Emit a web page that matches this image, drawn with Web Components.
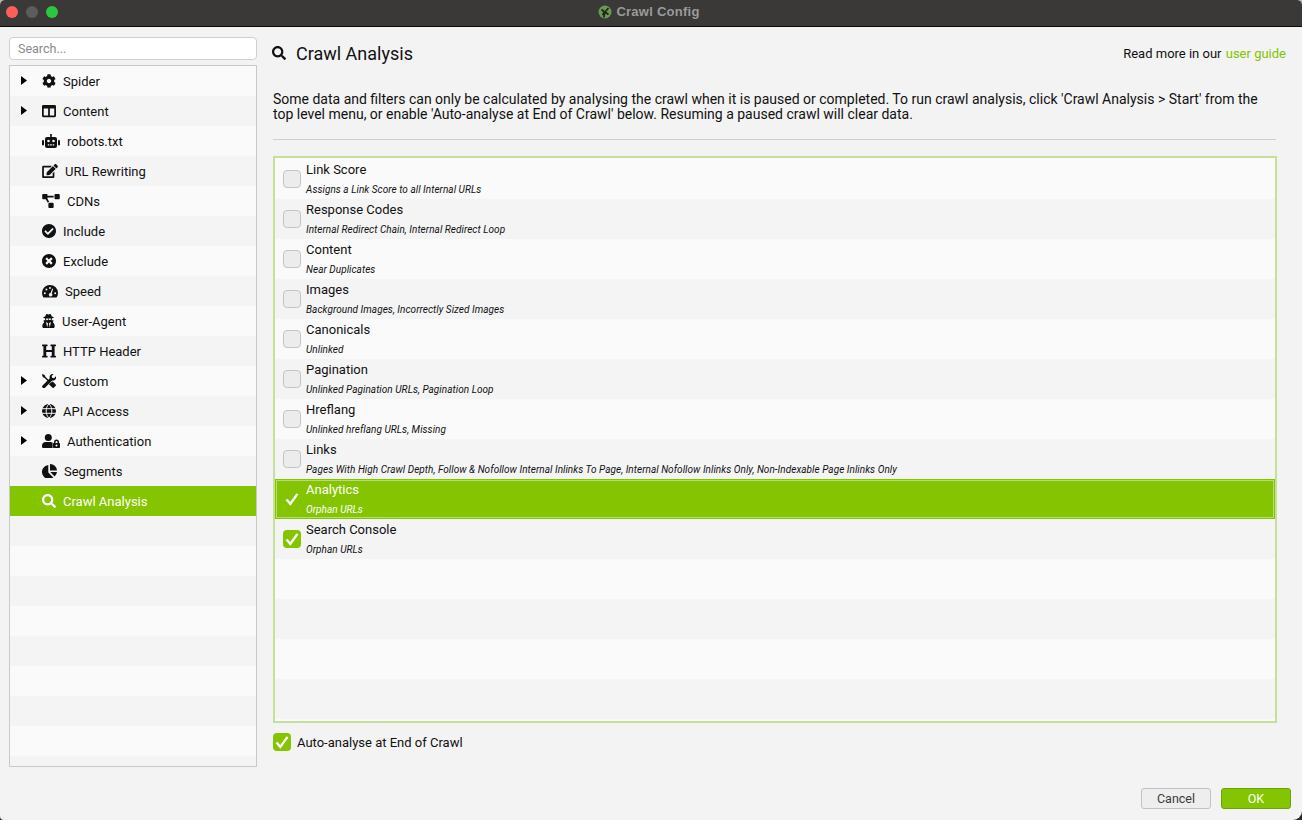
<!DOCTYPE html>
<html>
<head>
<meta charset="utf-8">
<title>Crawl Config</title>
<style>
  html, body { margin: 0; padding: 0; background: linear-gradient(#b5b5b5 50%, #2b2b2b 50%); }
  body { width: 1302px; height: 820px; overflow: hidden; font-family: Roboto, "Liberation Sans", sans-serif; }
</style>
</head>
<body>
<crawl-config></crawl-config>

<script>
const GREEN = '#84c400';

// Iconos
const ICONS = {
  cog: { w: 14, vb: '0 0 512 512', svg: '<path d="M487.4 315.7l-42.6-24.6c4.3-23.2 4.3-47 0-70.2l42.6-24.6c4.9-2.8 7.1-8.6 5.5-14-11.1-35.6-30-67.8-54.7-94.6-3.8-4.1-10-5.1-14.8-2.3L380.8 110c-17.9-15.4-38.5-27.3-60.8-35.1V25.8c0-5.6-3.9-10.5-9.4-11.7-36.7-8.2-74.3-7.8-109.2 0-5.5 1.2-9.4 6.1-9.4 11.7V75c-22.2 7.9-42.8 19.8-60.8 35.1L88.7 85.5c-4.9-2.8-11-1.9-14.8 2.3-24.7 26.7-43.6 58.9-54.7 94.6-1.7 5.4.6 11.2 5.5 14L67.3 221c-4.3 23.2-4.3 47 0 70.2l-42.6 24.6c-4.9 2.8-7.1 8.6-5.5 14 11.1 35.6 30 67.8 54.7 94.6 3.8 4.1 10 5.1 14.8 2.3l42.6-24.6c17.9 15.4 38.5 27.3 60.8 35.1v49.2c0 5.6 3.9 10.5 9.4 11.7 36.7 8.2 74.3 7.8 109.2 0 5.5-1.2 9.4-6.1 9.4-11.7v-49.2c22.2-7.9 42.8-19.8 60.8-35.1l42.6 24.6c4.9 2.8 11 1.9 14.8-2.3 24.7-26.7 43.6-58.9 54.7-94.6 1.5-5.5-.7-11.3-5.6-14.1zM256 336c-44.1 0-80-35.9-80-80s35.9-80 80-80 80 35.9 80 80-35.9 80-80 80z"/>' },
  columns: { w: 14, vb: '0 0 512 512', svg: '<path d="M464 32H48C21.490 32 0 53.490 0 80v352c0 26.510 21.490 48 48 48h416c26.510 0 48-21.490 48-48V80c0-26.510-21.490-48-48-48zM224 416H64V160h160v256zm224 0H288V160h160v256z"/>' },
  robot: { w: 18, vb: '0 0 18 14', svg: '<path fill-rule="evenodd" d="M8.200 1.500a1 1 0 1 1 1.600 0V3H13a2 2 0 0 1 2 2v7a2 2 0 0 1-2 2H5a2 2 0 0 1-2-2V5a2 2 0 0 1 2-2h3.200zM6.500 5.700a1.300 1.300 0 1 0 0 2.600 1.300 1.300 0 0 0 0-2.600zm5 0a1.300 1.300 0 1 0 0 2.600 1.300 1.300 0 0 0 0-2.600zM5.800 10.300v1.300h1.500v-1.300zm2.400 0v1.300h1.600v-1.300zm2.500 0v1.300h1.500v-1.300z"/><rect x="0" y="6" width="2" height="5.500" rx="1"/><rect x="16" y="6" width="2" height="5.500" rx="1"/>' },
  edit: { w: 16, vb: '0 0 576 512', svg: '<path d="M402.600 83.200l90.200 90.200c3.800 3.800 3.800 10 0 13.800L274.400 405.600l-92.800 10.300c-12.400 1.400-22.900-9.100-21.500-21.500l10.300-92.800L388.800 83.200c3.800-3.800 10-3.800 13.800 0zm162-22.900l-48.800-48.800c-15.200-15.200-39.900-15.200-55.200 0l-35.400 35.400c-3.800 3.800-3.800 10 0 13.800l90.200 90.200c3.800 3.800 10 3.800 13.800 0l35.400-35.400c15.200-15.300 15.200-40 0-55.200zM384 346.200V448H64V128h229.800c3.200 0 6.200-1.300 8.500-3.500l40-40c7.600-7.600 2.200-20.500-8.500-20.500H48C21.500 64 0 85.500 0 112v352c0 26.500 21.500 48 48 48h352c26.500 0 48-21.500 48-48V306.200c0-10.700-12.900-16-20.500-8.500l-40 40c-2.200 2.300-3.500 5.300-3.500 8.500z"/>' },
  cdn: { w: 18, vb: '0 0 640 512', svg: '<path d="M384 320H256c-17.670 0-32 14.330-32 32v128c0 17.670 14.330 32 32 32h128c17.670 0 32-14.330 32-32V352c0-17.670-14.330-32-32-32zM192 32c0-17.670-14.330-32-32-32H32C14.330 0 0 14.330 0 32v128c0 17.670 14.330 32 32 32h95.720l73.160 128.040C211.980 300.980 232.400 288 256 288h.280L192 175.510V128h224V64H192V32zM608 0H480c-17.670 0-32 14.330-32 32v128c0 17.670 14.330 32 32 32h128c17.670 0 32-14.330 32-32V32c0-17.670-14.330-32-32-32z"/>' },
  check: { w: 14, vb: '8 8 496 496', svg: '<path d="M504 256c0 136.967-111.033 248-248 248S8 392.967 8 256 119.033 8 256 8s248 111.033 248 248zM227.314 387.314l184-184c6.248-6.248 6.248-16.379 0-22.627l-22.627-22.627c-6.248-6.249-16.379-6.249-22.628 0L216 308.118l-70.059-70.059c-6.248-6.248-16.379-6.248-22.628 0l-22.627 22.627c-6.248 6.248-6.248 16.379 0 22.627l104 104c6.249 6.249 16.379 6.249 22.628.001z"/>' },
  times: { w: 14, vb: '8 8 496 496', svg: '<path d="M256 8C119 8 8 119 8 256s111 248 248 248 248-111 248-248S393 8 256 8zm121.600 313.100c4.700 4.700 4.700 12.300 0 17L338 377.600c-4.700 4.700-12.300 4.700-17 0L256 312l-65.100 65.600c-4.700 4.700-12.300 4.700-17 0L134.400 338c-4.700-4.700-4.700-12.300 0-17l65.600-65-65.600-65.100c-4.700-4.700-4.700-12.300 0-17l39.600-39.600c4.700-4.700 12.300-4.700 17 0l65 65.700 65.100-65.600c4.700-4.700 12.300-4.700 17 0l39.600 39.600c4.700 4.700 4.700 12.300 0 17L312 256l65.600 65.100z"/>' },
  gauge: { w: 16, vb: '0 0 16 14', svg: '<path fill-rule="evenodd" d="M8 1a8 8 0 0 1 8 8c0 1.500-.4 2.900-1.100 4a1.200 1.200 0 0 1-1 .5H2.100a1.200 1.200 0 0 1-1-.5A8 8 0 0 1 8 1zM8 3a1 1 0 1 0 0 2 1 1 0 0 0 0-2zM4.400 4.500a1 1 0 1 0 0 2 1 1 0 0 0 0-2zM2.800 8.200a1 1 0 1 0 0 2 1 1 0 0 0 0-2zm10.400 0a1 1 0 1 0 0 2 1 1 0 0 0 0-2zM11.200 4.700l-1 .1L8.500 9a1.700 1.700 0 1 0 1.300.5z"/>' },
  agent: { w: 13, vb: '0 0 448 512', svg: '<path d="M383.900 308.300l23.900-62.600c4-10.500-3.700-21.700-15-21.700h-58.500c11-18.900 17.800-40.600 17.800-64v-.3c39.200-7.800 64-19.100 64-31.700 0-13.300-27.300-25.100-70.100-33-9.200-32.800-27-65.800-40.600-82.800-9.500-11.900-25.900-15.600-39.500-8.800l-27.600 13.800c-9 4.500-19.600 4.500-28.600 0L182.100 3.400c-13.600-6.800-30-3.100-39.500 8.800-13.500 17-31.400 50-40.600 82.800-42.700 7.900-70 19.700-70 33 0 12.600 24.800 23.900 64 31.700v.3c0 23.400 6.800 45.100 17.800 64H56.300c-11.500 0-19.200 11.700-14.700 22.300l25.800 60.200C27.300 329.800 0 372.700 0 422.400v44.800C0 491.900 20.100 512 44.800 512h358.400c24.700 0 44.800-20.100 44.800-44.800v-44.800c0-48.400-25.800-90.400-64.100-114.100zM176 480l-41.600-192 49.600 32 24 40-32 120zm96 0l-32-120 24-40 49.600-32L272 480zm41.700-298.500c-3.900 11.900-7 24.600-16.500 33.400-10.100 9.300-48 22.400-64-25-2.800-8.400-15.400-8.400-18.300 0-17 50.200-56 32.400-64 25-9.500-8.800-12.700-21.500-16.500-33.400-.8-2.500-6.300-5.700-6.300-5.800v-10.800c28.300 3.600 61 5.800 96 5.800s67.700-2.200 96-5.800v10.800c-.1.100-5.600 3.200-6.400 5.800z"/>' },
  heading: { w: 14, vb: '16 32 480 448', svg: '<path d="M448 96v320h32a16 16 0 0 1 16 16v32a16 16 0 0 1-16 16H320a16 16 0 0 1-16-16v-32a16 16 0 0 1 16-16h32V288H160v128h32a16 16 0 0 1 16 16v32a16 16 0 0 1-16 16H32a16 16 0 0 1-16-16v-32a16 16 0 0 1 16-16h32V96H32a16 16 0 0 1-16-16V48a16 16 0 0 1 16-16h160a16 16 0 0 1 16 16v32a16 16 0 0 1-16 16h-32v128h192V96h-32a16 16 0 0 1-16-16V48a16 16 0 0 1 16-16h160a16 16 0 0 1 16 16v32a16 16 0 0 1-16 16z"/>' },
  tools: { w: 14, vb: '0 0 14 14', svg: '<path d="M.7 0L0 .7l.9 2.500 1.500.6 3 3 1-1-3-3-.6-1.500zM10.800 0a3.200 3.200 0 0 0-3 4.300L.6 11.500a1.600 1.600 0 0 0 0 2.200l.2.100a1.600 1.600 0 0 0 2.200 0l7.200-7.200a3.200 3.200 0 0 0 3.700-4.300L12 4.200l-1.900-.4-.4-1.900L11.600.1a3.200 3.200 0 0 0-.8-.1zM8.500 8.700l-1.600 1.600 3.300 3.300a1.300 1.300 0 0 0 1.800 0l1.500-1.500a1.300 1.300 0 0 0 0-1.800l-2.800-2.800z"/>' },
  globe: { w: 14, vb: '0 0 14 14', svg: '<circle cx="7" cy="7" r="7"/><path d="M0 4.700h14M0 9.300h14M7 0c-2.200 2-2.800 4.500-2.800 7s.6 5 2.800 7M7 0c2.200 2 2.800 4.500 2.800 7s-.6 5-2.800 7" fill="none" stroke="var(--bg,#fff)" stroke-width="1"/>' },
  userlock: { w: 18, vb: '0 0 18 14', svg: '<circle cx="6.300" cy="3.500" r="3.500"/><path d="M4 8h4.600c.7 0 1.400.2 2 .5v5.500H1.300A1.300 1.300 0 0 1 0 12.700v-.7A4 4 0 0 1 4 8z"/><path fill-rule="evenodd" d="M14.500 5.500a2.500 2.500 0 0 1 2.500 2.500v1h.2c.4 0 .8.400.8.800v3.400c0 .4-.4.800-.8.800h-5.400a.8.800 0 0 1-.8-.8V9.800c0-.4.400-.8.800-.8h.2V8a2.500 2.500 0 0 1 2.500-2.500zm0 1.500a1 1 0 0 0-1 1v1h2V8a1 1 0 0 0-1-1zm0 3.500a1 1 0 1 0 0 2 1 1 0 0 0 0-2z"/>' },
  pie: { w: 15, vb: '0 0 15 14', svg: '<path d="M6.300 1v7.500l5 5A7 7 0 1 1 6.300 1z"/><path d="M8 0a7 7 0 0 1 7 6.500H8z"/><path d="M8.300 8h6.700a7 7 0 0 1-2.400 4.500z"/>' },
  search: { w: 14, vb: '0 0 512 512', svg: '<path d="M505 442.700L405.300 343c-4.500-4.500-10.600-7-17-7H372c27.600-35.300 44-79.700 44-128C416 93.100 322.900 0 208 0S0 93.100 0 208s93.100 208 208 208c48.300 0 92.700-16.400 128-44v16.300c0 6.400 2.500 12.500 7 17l99.700 99.700c9.400 9.400 24.600 9.400 33.900 0l28.300-28.300c9.400-9.400 9.400-24.600.1-34zM208 336c-70.700 0-128-57.200-128-128 0-70.700 57.200-128 128-128 70.700 0 128 57.200 128 128 0 70.700-57.200 128-128 128z"/>' }
};

// Datos del arbol y de la lista
const tree_items = [
  { label: 'Spider', icon: 'cog', arrow: true },
  { label: 'Content', icon: 'columns', arrow: true },
  { label: 'robots.txt', icon: 'robot' },
  { label: 'URL Rewriting', icon: 'edit' },
  { label: 'CDNs', icon: 'cdn' },
  { label: 'Include', icon: 'check' },
  { label: 'Exclude', icon: 'times' },
  { label: 'Speed', icon: 'gauge' },
  { label: 'User-Agent', icon: 'agent' },
  { label: 'HTTP Header', icon: 'heading' },
  { label: 'Custom', icon: 'tools', arrow: true },
  { label: 'API Access', icon: 'globe', arrow: true },
  { label: 'Authentication', icon: 'userlock', arrow: true },
  { label: 'Segments', icon: 'pie' },
  { label: 'Crawl Analysis', icon: 'search', selected: true }
];

const analysis_items = [
  { title: 'Link Score', sub: 'Assigns a Link Score to all Internal URLs' },
  { title: 'Response Codes', sub: 'Internal Redirect Chain, Internal Redirect Loop' },
  { title: 'Content', sub: 'Near Duplicates' },
  { title: 'Images', sub: 'Background Images, Incorrectly Sized Images' },
  { title: 'Canonicals', sub: 'Unlinked' },
  { title: 'Pagination', sub: 'Unlinked Pagination URLs, Pagination Loop' },
  { title: 'Hreflang', sub: 'Unlinked hreflang URLs, Missing' },
  { title: 'Links', sub: 'Pages With High Crawl Depth, Follow & Nofollow Internal Inlinks To Page, Internal Nofollow Inlinks Only, Non-Indexable Page Inlinks Only' },
  { title: 'Analytics', sub: 'Orphan URLs', checked: true, selected: true },
  { title: 'Search Console', sub: 'Orphan URLs', checked: true }
];

const iconSvg = (name, h = 14) => {
  const i = ICONS[name];
  return `<svg width="${i.w}" height="${h}" viewBox="${i.vb}" fill="currentColor" style="display:block;flex:none">${i.svg}</svg>`;
};

const tick = '<svg width="18" height="18" viewBox="0 0 18 18" style="display:block"><path d="M3.500 9.500l3.800 4.300L14.500 3.800" fill="none" stroke="#fff" stroke-width="2.300"/></svg>';

class TitleBar extends HTMLElement {
  constructor() { super(); this.attachShadow({ mode: 'open' }); }
  connectedCallback() {
    this.shadowRoot.innerHTML = `
      <style>
        :host { display: flex; align-items: center; height: 24px; padding-bottom: 2px; background: #3a3937; border-bottom: 1px solid #0c0c0c; flex: none; }
        .lights { display: flex; gap: 8px; padding-left: 6px; }
        .lights i { width: 12px; height: 12px; border-radius: 50%; display: block; }
        .center { flex: 1; display: flex; justify-content: center; align-items: center; gap: 4px; margin: 0 0 1px -62px; color: #9b9b9b; font: bold 13px "Liberation Sans", sans-serif; letter-spacing: .25px; }
      </style>
      <div class="lights">
        <i style="background:#fe5f57"></i><i style="background:#5c5c5c"></i><i style="background:#2ac840"></i>
      </div>
      <div class="center">
        <svg width="14" height="14" viewBox="0 0 14 14" style="display:block"><circle cx="7" cy="7" r="6.500" fill="#6a9a52"/><path d="M3.500 4.500l3 2.500-2 3M10.500 3L7 7l3.500 2.500M6.700 7l-.7 5.500" fill="none" stroke="#1f241c" stroke-width="1.700"/></svg>
        <span>Crawl Config</span>
      </div>`;
  }
}

class TreeItem extends HTMLElement {
  constructor() { super(); this.attachShadow({ mode: 'open' }); }
  connectedCallback() {
    const sel = this.hasAttribute('selected');
    const arrow = this.hasAttribute('arrow');
    const odd = this.hasAttribute('odd');
    const icon = this.getAttribute('icon');
    this.shadowRoot.innerHTML = `
      <style>
        :host { display: flex; align-items: center; height: 30px; flex: none; font-size: 13px;
                --bg: ${sel ? GREEN : odd ? '#f4f4f4' : '#fafafa'};
                background: var(--bg); color: ${sel ? '#fff' : '#111'}; }
        .arrow { width: 32px; flex: none; display: flex; padding-left: 11px; box-sizing: border-box; margin-top: -1px; }
        .icon { margin-right: 7px; margin-top: -1px; }
      </style>
      <div class="arrow">${arrow ? '<svg width="6" height="9" viewBox="0 0 6 9" style="display:block"><path d="M0 0l6 4.500L0 9z"/></svg>' : ''}</div>
      ${icon ? `<div class="icon">${iconSvg(icon)}</div>` : ''}
      <span><slot></slot></span>`;
  }
}

class ConfigTree extends HTMLElement {
  constructor() { super(); this.attachShadow({ mode: 'open' }); }
  connectedCallback() {
    let rows = '';
    for (let i = 0; i < 24; i++) {
      const item = tree_items[i];
      const odd = i % 2 === 1 ? 'odd' : '';
      if (item) {
        rows += `<tree-item icon="${item.icon}" ${odd} ${item.arrow ? 'arrow' : ''} ${item.selected ? 'selected' : ''}>${item.label}</tree-item>`;
      } else {
        rows += `<tree-item ${odd}></tree-item>`;
      }
    }
    this.shadowRoot.innerHTML = `
      <style>
        :host { display: flex; flex-direction: column; width: 248px; flex: none; }
        .search { height: 23px; box-sizing: border-box; border: 1px solid #cfcfcf; border-radius: 4px; background: #fff; color: #8a8a8a; font-size: 12.500px; line-height: 21px; padding-left: 8px; margin-bottom: 5px; }
        .tree { height: 702px; box-sizing: border-box; border: 1px solid #c9c9c9; display: flex; flex-direction: column; overflow: hidden; background: #fafafa; }
      </style>
      <div class="search">Search...</div>
      <div class="tree">${rows}</div>`;
  }
}

class CheckRow extends HTMLElement {
  constructor() { super(); this.attachShadow({ mode: 'open' }); }
  connectedCallback() {
    const sel = this.hasAttribute('selected');
    const checked = this.hasAttribute('checked');
    const odd = this.hasAttribute('odd');
    const title = this.getAttribute('title-text');
    const box = sel
      ? `<div class="box">${tick}</div>`
      : checked
        ? `<div class="box on">${tick}</div>`
        : title ? '<div class="box off"></div>' : '';
    this.shadowRoot.innerHTML = `
      <style>
        :host { display: flex; align-items: stretch; height: 40px; box-sizing: border-box; flex: none; padding-left: 8px;
                background: ${sel ? GREEN : odd ? '#f4f4f4' : '#fafafa'}; color: ${sel ? '#fff' : '#111'};
                ${sel ? 'outline: 1px solid #b5dd75; outline-offset: -2px;' : ''} }
        .box { width: 18px; height: 18px; box-sizing: border-box; border-radius: 4px; align-self: center; flex: none; }
        .off { background: #ececec; border: 1px solid #c4c4c4; }
        .on { background: ${GREEN}; }
        .text { margin-left: 5px; display: flex; flex-direction: column; white-space: nowrap; }
        .title { font-size: 13px; line-height: 21px; }
        .sub { font-size: 10px; line-height: 19px; font-style: italic; letter-spacing: .05px; }
      </style>
      ${box}
      ${title ? `<div class="text"><div class="title">${title}</div><div class="sub"><slot></slot></div></div>` : ''}`;
  }
}

class AnalysisList extends HTMLElement {
  constructor() { super(); this.attachShadow({ mode: 'open' }); }
  connectedCallback() {
    let rows = '';
    for (let i = 0; i < 14; i++) {
      const item = analysis_items[i];
      const odd = i % 2 === 1 ? 'odd' : '';
      if (item) {
        rows += `<check-row title-text="${item.title}" ${odd} ${item.checked ? 'checked' : ''} ${item.selected ? 'selected' : ''}>${item.sub.replace('&', '&amp;')}</check-row>`;
      } else {
        rows += `<check-row ${odd}></check-row>`;
      }
    }
    this.shadowRoot.innerHTML = `
      <style>
        :host { display: flex; flex-direction: column; height: 567px; box-sizing: border-box; border: 2px solid #c6e09c; padding: 1px 0 0; background: #fafafa; flex: none; }
      </style>
      ${rows}`;
  }
}

class AppButton extends HTMLElement {
  constructor() { super(); this.attachShadow({ mode: 'open' }); }
  connectedCallback() {
    const primary = this.hasAttribute('primary');
    this.shadowRoot.innerHTML = `
      <style>
        :host { display: flex; align-items: center; justify-content: center; width: 70px; height: 21px; box-sizing: border-box; border-radius: 3px; font-size: 12.500px;
                border: 1px solid ${primary ? '#6fa400' : '#c2c2c2'}; background: ${primary ? GREEN : '#eeeeee'}; color: ${primary ? '#fff' : '#3a3a3a'}; }
      </style>
      <slot></slot>`;
  }
}

class AnalysisPanel extends HTMLElement {
  constructor() { super(); this.attachShadow({ mode: 'open' }); }
  connectedCallback() {
    this.shadowRoot.innerHTML = `
      <style>
        :host { display: flex; flex-direction: column; flex: 1; min-width: 0; color: #111; }
        .head { display: flex; align-items: center; height: 32px; margin-bottom: 23px; }
        .head svg { margin: 0 9px 0 -1px; }
        h1 { margin: 0; font-size: 18px; font-weight: 400; flex: 1; margin-left: 1px; }
        .guide { font-size: 13px; margin: 1px -9px 0 0; }
        .guide span { color: ${GREEN}; margin-left: 1px; }
        p { margin: 0; font-size: 14px; line-height: 15px; height: 30px; }
        hr { border: 0; border-top: 1px solid #cfcfcf; margin: 17px 0 16px; width: 1003px; }
        .auto { display: flex; align-items: center; margin-top: 10px; font-size: 13px; }
        .auto .box { width: 18px; height: 18px; border-radius: 4px; background: ${GREEN}; margin-right: 6px; }
      </style>
      <div class="head">${iconSvg('search', 14)}<h1>Crawl Analysis</h1><div class="guide">Read more in our <span>user guide</span></div></div>
      <p>Some data and filters can only be calculated by analysing the crawl when it is paused or completed. To run crawl analysis, click 'Crawl Analysis &gt; Start' from the top level menu, or enable 'Auto-analyse at End of Crawl' below. Resuming a paused crawl will clear data.</p>
      <hr>
      <analysis-list></analysis-list>
      <div class="auto"><div class="box">${tick}</div><span>Auto-analyse at End of Crawl</span></div>`;
  }
}

class CrawlConfig extends HTMLElement {
  constructor() { super(); this.attachShadow({ mode: 'open' }); }
  connectedCallback() {
    this.shadowRoot.innerHTML = `
      <style>
        :host { display: flex; flex-direction: column; width: 1302px; height: 820px; background: #f3f3f3; border-radius: 5px 5px 9px 4px; overflow: hidden; }
        .body { display: flex; flex: 1; gap: 16px; padding: 10px 25px 0 9px; }
        .foot { display: flex; justify-content: flex-end; gap: 10px; padding: 0 11px 11px 0; flex: none; }
      </style>
      <title-bar></title-bar>
      <div class="body">
        <config-tree></config-tree>
        <analysis-panel></analysis-panel>
      </div>
      <div class="foot">
        <app-button>Cancel</app-button>
        <app-button primary>OK</app-button>
      </div>`;
  }
}

customElements.define('title-bar', TitleBar);
customElements.define('tree-item', TreeItem);
customElements.define('config-tree', ConfigTree);
customElements.define('check-row', CheckRow);
customElements.define('analysis-list', AnalysisList);
customElements.define('app-button', AppButton);
customElements.define('analysis-panel', AnalysisPanel);
customElements.define('crawl-config', CrawlConfig);
</script>
</body>
</html>
